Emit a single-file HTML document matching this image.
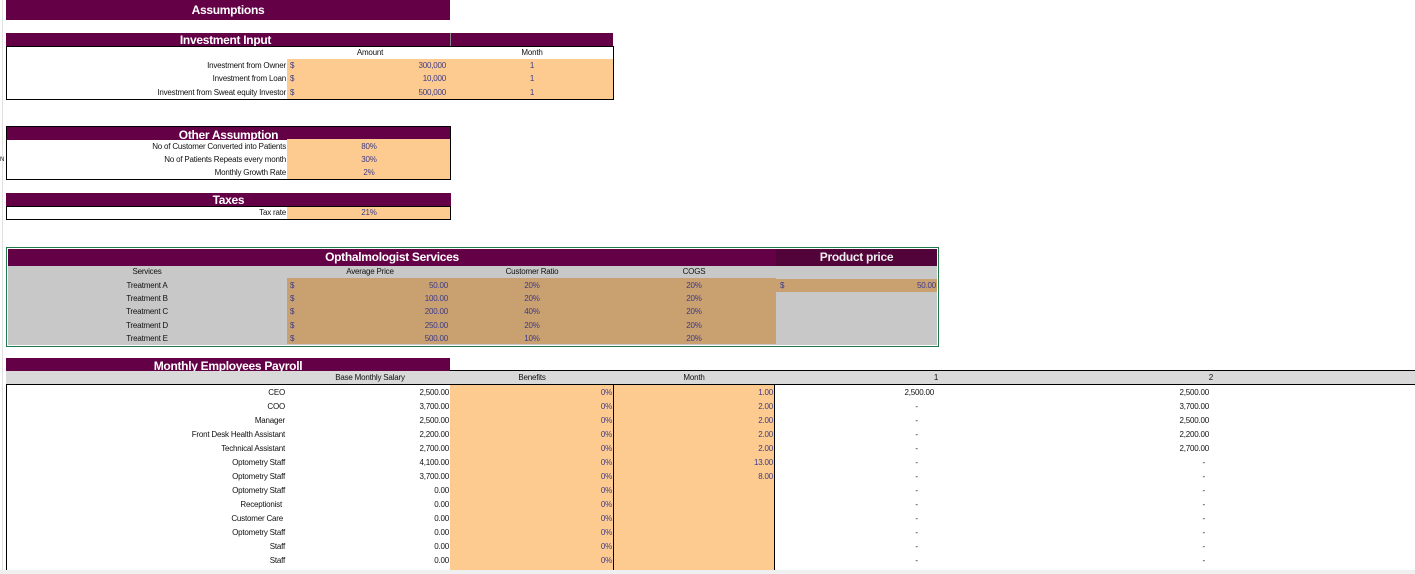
<!DOCTYPE html>
<html><head><meta charset="utf-8"><style>
*{margin:0;padding:0;box-sizing:border-box}
body{width:1415px;height:574px;background:#fff;position:relative;overflow:hidden;font-family:"Liberation Sans",sans-serif;font-size:8px;color:#111}
div{position:absolute}
.p{background:#640046;color:#fff;font-weight:bold;text-align:center;font-size:12px;letter-spacing:-0.3px}
.o{background:#fdcb8f}
.tan{background:#c9a06f}
.t{white-space:nowrap;line-height:12px;height:12px;font-size:8px;letter-spacing:-0.2px}
.r{text-align:right}.c{text-align:center}
.b{color:#3a3a8a}
.bx{border:1px solid #000}
</style></head><body>
<div style="left:2px;top:0;width:1px;height:574px;background:#e0e0e0"></div>
<div style="left:0;top:570px;width:1415px;height:4px;background:#f0f0f0"></div>

<div class="p" style="left:6px;top:0;width:444px;height:20px;line-height:20px">Assumptions</div>

<!-- Investment -->
<div class="p" style="left:6px;top:33px;width:607px;height:14px;line-height:14px"><span style="position:relative;left:-84px">Investment Input</span></div>
<div style="left:450px;top:33px;width:1px;height:13px;background:#888"></div>
<div class="bx" style="left:6px;top:46px;width:608px;height:54px"></div>
<div class="o" style="left:287px;top:59px;width:326px;height:40px"></div>
<div class="t c" style="left:290px;top:47px;width:160px">Amount</div>
<div class="t c" style="left:451px;top:47px;width:162px">Month</div>
<div class="t r" style="left:10px;top:60px;width:276px">Investment from Owner</div>
<div class="t r" style="left:10px;top:73px;width:276px">Investment from Loan</div>
<div class="t r" style="left:10px;top:87px;width:276px">Investment from Sweat equity Investor</div>
<div class="t b" style="left:290px;top:60px">$</div><div class="t b" style="left:290px;top:73px">$</div><div class="t b" style="left:290px;top:87px">$</div>
<div class="t r b" style="left:300px;top:60px;width:146px">300,000</div>
<div class="t r b" style="left:300px;top:73px;width:146px">10,000</div>
<div class="t r b" style="left:300px;top:87px;width:146px">500,000</div>
<div class="t c b" style="left:451px;top:60px;width:162px">1</div>
<div class="t c b" style="left:451px;top:73px;width:162px">1</div>
<div class="t c b" style="left:451px;top:87px;width:162px">1</div>

<!-- Other -->
<div class="p" style="left:6px;top:126px;width:445px;height:14px;line-height:16px;border:1px solid #000;border-bottom:0">Other Assumption</div>
<div class="bx" style="left:6px;top:139px;width:445px;height:41px;border-top:0"></div>
<div class="o" style="left:287px;top:139px;width:163px;height:40px"></div>
<div class="t" style="left:0;top:154px;font-size:6px">N</div>
<div class="t r" style="left:10px;top:141px;width:276px">No of Customer Converted into Patients</div>
<div class="t r" style="left:10px;top:154px;width:276px">No of Patients Repeats every month</div>
<div class="t r" style="left:10px;top:167px;width:276px">Monthly Growth Rate</div>
<div class="t c b" style="left:288px;top:141px;width:162px">80%</div>
<div class="t c b" style="left:288px;top:154px;width:162px">30%</div>
<div class="t c b" style="left:288px;top:167px;width:162px">2%</div>

<!-- Taxes -->
<div class="p" style="left:6px;top:193px;width:445px;height:14px;line-height:15px">Taxes</div>
<div class="bx" style="left:6px;top:206px;width:445px;height:14px"></div>
<div class="o" style="left:287px;top:207px;width:163px;height:12px"></div>
<div class="t r" style="left:10px;top:207px;width:276px">Tax rate</div>
<div class="t c b" style="left:288px;top:207px;width:162px">21%</div>

<!-- Services -->
<div style="left:6px;top:247px;width:933px;height:100px;border:1px solid #1e7a4a"></div>
<div class="p" style="left:8px;top:249px;width:768px;height:17px;line-height:17px">Opthalmologist Services</div>
<div class="p" style="left:776px;top:249px;width:161px;height:17px;line-height:17px;background:#52033a;color:#eee">Product price</div>
<div style="left:8px;top:266px;width:929px;height:79px;background:#c8c8c8"></div>
<div class="tan" style="left:287px;top:278px;width:489px;height:66px"></div>
<div class="tan" style="left:776px;top:279px;width:161px;height:13px"></div>
<div class="t c" style="left:8px;top:266px;width:278px">Services</div>
<div class="t c" style="left:290px;top:266px;width:160px">Average Price</div>
<div class="t c" style="left:451px;top:266px;width:162px">Customer Ratio</div>
<div class="t c" style="left:613px;top:266px;width:162px">COGS</div>
<div class="t c" style="left:8px;top:280px;width:278px">Treatment A</div>
<div class="t c" style="left:8px;top:293px;width:278px">Treatment B</div>
<div class="t c" style="left:8px;top:306px;width:278px">Treatment C</div>
<div class="t c" style="left:8px;top:320px;width:278px">Treatment D</div>
<div class="t c" style="left:8px;top:333px;width:278px">Treatment E</div>
<div class="t b" style="left:290px;top:280px">$</div><div class="t b" style="left:290px;top:293px">$</div><div class="t b" style="left:290px;top:306px">$</div><div class="t b" style="left:290px;top:320px">$</div><div class="t b" style="left:290px;top:333px">$</div>
<div class="t r b" style="left:300px;top:280px;width:148px">50.00</div>
<div class="t r b" style="left:300px;top:293px;width:148px">100.00</div>
<div class="t r b" style="left:300px;top:306px;width:148px">200.00</div>
<div class="t r b" style="left:300px;top:320px;width:148px">250.00</div>
<div class="t r b" style="left:300px;top:333px;width:148px">500.00</div>
<div class="t c b" style="left:451px;top:280px;width:162px">20%</div>
<div class="t c b" style="left:451px;top:293px;width:162px">20%</div>
<div class="t c b" style="left:451px;top:306px;width:162px">40%</div>
<div class="t c b" style="left:451px;top:320px;width:162px">20%</div>
<div class="t c b" style="left:451px;top:333px;width:162px">10%</div>
<div class="t c b" style="left:613px;top:280px;width:162px">20%</div>
<div class="t c b" style="left:613px;top:293px;width:162px">20%</div>
<div class="t c b" style="left:613px;top:306px;width:162px">20%</div>
<div class="t c b" style="left:613px;top:320px;width:162px">20%</div>
<div class="t c b" style="left:613px;top:333px;width:162px">20%</div>
<div class="t b" style="left:780px;top:280px">$</div>
<div class="t r b" style="left:790px;top:280px;width:146px">50.00</div>

<!-- Payroll -->
<div class="p" style="left:6px;top:358px;width:444px;height:14px;line-height:16px;overflow:hidden">Monthly Employees Payroll</div>
<div style="left:450px;top:370px;width:965px;height:1px;background:#000"></div>
<div style="left:6px;top:371px;width:1409px;height:14px;background:#d9d9d9;border-bottom:1px solid #000"></div>
<div class="t c" style="left:290px;top:372px;width:160px">Base Monthly Salary</div>
<div class="t c" style="left:451px;top:372px;width:162px">Benefits</div>
<div class="t c" style="left:613px;top:372px;width:162px">Month</div>
<div class="t c" style="left:776px;top:372px;width:320px">1</div>
<div class="t r" style="left:1100px;top:372px;width:113px">2</div>
<div style="left:6px;top:385px;width:1px;height:185px;background:#000"></div>
<div class="o" style="left:450px;top:385px;width:163px;height:185px"></div>
<div class="o" style="left:613px;top:385px;width:162px;height:185px;border-left:1px solid #000;border-right:1px solid #000"></div>

<div class="t r" style="left:10px;top:387px;width:275px">CEO</div>
<div class="t r" style="left:10px;top:401px;width:275px">COO</div>
<div class="t r" style="left:10px;top:415px;width:275px">Manager</div>
<div class="t r" style="left:10px;top:429px;width:275px">Front Desk Health Assistant</div>
<div class="t r" style="left:10px;top:443px;width:275px">Technical Assistant</div>
<div class="t r" style="left:10px;top:457px;width:275px">Optometry Staff</div>
<div class="t r" style="left:10px;top:471px;width:275px">Optometry Staff</div>
<div class="t r" style="left:10px;top:485px;width:275px">Optometry Staff</div>
<div class="t r" style="left:10px;top:499px;width:272px">Receptionist</div>
<div class="t r" style="left:10px;top:513px;width:273px">Customer Care</div>
<div class="t r" style="left:10px;top:527px;width:275px">Optometry Staff</div>
<div class="t r" style="left:10px;top:541px;width:275px">Staff</div>
<div class="t r" style="left:10px;top:555px;width:275px">Staff</div>

<div class="t r" style="left:300px;top:387px;width:149px">2,500.00</div>
<div class="t r" style="left:300px;top:401px;width:149px">3,700.00</div>
<div class="t r" style="left:300px;top:415px;width:149px">2,500.00</div>
<div class="t r" style="left:300px;top:429px;width:149px">2,200.00</div>
<div class="t r" style="left:300px;top:443px;width:149px">2,700.00</div>
<div class="t r" style="left:300px;top:457px;width:149px">4,100.00</div>
<div class="t r" style="left:300px;top:471px;width:149px">3,700.00</div>
<div class="t r" style="left:300px;top:485px;width:149px">0.00</div>
<div class="t r" style="left:300px;top:499px;width:149px">0.00</div>
<div class="t r" style="left:300px;top:513px;width:149px">0.00</div>
<div class="t r" style="left:300px;top:527px;width:149px">0.00</div>
<div class="t r" style="left:300px;top:541px;width:149px">0.00</div>
<div class="t r" style="left:300px;top:555px;width:149px">0.00</div>

<div class="t r b" style="left:460px;top:387px;width:152px">0%</div>
<div class="t r b" style="left:460px;top:401px;width:152px">0%</div>
<div class="t r b" style="left:460px;top:415px;width:152px">0%</div>
<div class="t r b" style="left:460px;top:429px;width:152px">0%</div>
<div class="t r b" style="left:460px;top:443px;width:152px">0%</div>
<div class="t r b" style="left:460px;top:457px;width:152px">0%</div>
<div class="t r b" style="left:460px;top:471px;width:152px">0%</div>
<div class="t r b" style="left:460px;top:485px;width:152px">0%</div>
<div class="t r b" style="left:460px;top:499px;width:152px">0%</div>
<div class="t r b" style="left:460px;top:513px;width:152px">0%</div>
<div class="t r b" style="left:460px;top:527px;width:152px">0%</div>
<div class="t r b" style="left:460px;top:541px;width:152px">0%</div>
<div class="t r b" style="left:460px;top:555px;width:152px">0%</div>

<div class="t r b" style="left:620px;top:387px;width:153px">1.00</div>
<div class="t r b" style="left:620px;top:401px;width:153px">2.00</div>
<div class="t r b" style="left:620px;top:415px;width:153px">2.00</div>
<div class="t r b" style="left:620px;top:429px;width:153px">2.00</div>
<div class="t r b" style="left:620px;top:443px;width:153px">2.00</div>
<div class="t r b" style="left:620px;top:457px;width:153px">13.00</div>
<div class="t r b" style="left:620px;top:471px;width:153px">8.00</div>

<div class="t r" style="left:800px;top:387px;width:134px">2,500.00</div>
<div class="t r" style="left:800px;top:401px;width:134px">-&nbsp;&nbsp;&nbsp;&nbsp;&nbsp;&nbsp;&nbsp;&nbsp;</div>
<div class="t r" style="left:800px;top:415px;width:134px">-&nbsp;&nbsp;&nbsp;&nbsp;&nbsp;&nbsp;&nbsp;&nbsp;</div>
<div class="t r" style="left:800px;top:429px;width:134px">-&nbsp;&nbsp;&nbsp;&nbsp;&nbsp;&nbsp;&nbsp;&nbsp;</div>
<div class="t r" style="left:800px;top:443px;width:134px">-&nbsp;&nbsp;&nbsp;&nbsp;&nbsp;&nbsp;&nbsp;&nbsp;</div>
<div class="t r" style="left:800px;top:457px;width:134px">-&nbsp;&nbsp;&nbsp;&nbsp;&nbsp;&nbsp;&nbsp;&nbsp;</div>
<div class="t r" style="left:800px;top:471px;width:134px">-&nbsp;&nbsp;&nbsp;&nbsp;&nbsp;&nbsp;&nbsp;&nbsp;</div>
<div class="t r" style="left:800px;top:485px;width:134px">-&nbsp;&nbsp;&nbsp;&nbsp;&nbsp;&nbsp;&nbsp;&nbsp;</div>
<div class="t r" style="left:800px;top:499px;width:134px">-&nbsp;&nbsp;&nbsp;&nbsp;&nbsp;&nbsp;&nbsp;&nbsp;</div>
<div class="t r" style="left:800px;top:513px;width:134px">-&nbsp;&nbsp;&nbsp;&nbsp;&nbsp;&nbsp;&nbsp;&nbsp;</div>
<div class="t r" style="left:800px;top:527px;width:134px">-&nbsp;&nbsp;&nbsp;&nbsp;&nbsp;&nbsp;&nbsp;&nbsp;</div>
<div class="t r" style="left:800px;top:541px;width:134px">-&nbsp;&nbsp;&nbsp;&nbsp;&nbsp;&nbsp;&nbsp;&nbsp;</div>
<div class="t r" style="left:800px;top:555px;width:134px">-&nbsp;&nbsp;&nbsp;&nbsp;&nbsp;&nbsp;&nbsp;&nbsp;</div>

<div class="t r" style="left:1080px;top:387px;width:129px">2,500.00</div>
<div class="t r" style="left:1080px;top:401px;width:129px">3,700.00</div>
<div class="t r" style="left:1080px;top:415px;width:129px">2,500.00</div>
<div class="t r" style="left:1080px;top:429px;width:129px">2,200.00</div>
<div class="t r" style="left:1080px;top:443px;width:129px">2,700.00</div>
<div class="t r" style="left:1080px;top:457px;width:129px">-&nbsp;&nbsp;</div>
<div class="t r" style="left:1080px;top:471px;width:129px">-&nbsp;&nbsp;</div>
<div class="t r" style="left:1080px;top:485px;width:129px">-&nbsp;&nbsp;</div>
<div class="t r" style="left:1080px;top:499px;width:129px">-&nbsp;&nbsp;</div>
<div class="t r" style="left:1080px;top:513px;width:129px">-&nbsp;&nbsp;</div>
<div class="t r" style="left:1080px;top:527px;width:129px">-&nbsp;&nbsp;</div>
<div class="t r" style="left:1080px;top:541px;width:129px">-&nbsp;&nbsp;</div>
<div class="t r" style="left:1080px;top:555px;width:129px">-&nbsp;&nbsp;</div>
</body></html>
